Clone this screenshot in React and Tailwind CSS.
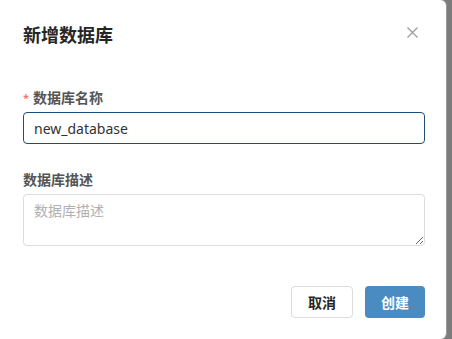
import React from "react";

export default function App() {
  const font = { fontFamily: '"Noto Sans", "Noto Sans CJK SC", sans-serif' };
  return (
    <div className="w-[452px] h-[339px] bg-[#7c7c7c] overflow-hidden" style={font}>
      <div className="w-[447px] h-[339px] bg-white rounded-r-[6px] border-r border-[#9a9a9a] flex flex-col pl-[23px] pr-[21px]">
        <div className="flex items-start justify-between pt-[23px]">
          <h2 className="text-[18px] leading-[24px] font-bold text-[#262626]">新增数据库</h2>
          <button className="w-[11px] h-[11px] mt-[4px] mr-[7px] flex items-center justify-center">
            <svg width="11" height="11" viewBox="0 0 11 11" fill="none" stroke="#9a9a9a" strokeWidth="1.2">
              <path d="M0.5 0.5L10.5 10.5M10.5 0.5L0.5 10.5" />
            </svg>
          </button>
        </div>

        <label className="mt-[41px] flex items-start text-[14px] leading-[20px] font-semibold text-[#555]">
          <span className="text-[#f56c6c] text-[11px] leading-[14px] mr-[4px] mt-[3px]">*</span>
          数据库名称
        </label>
        <div className="mt-[4px] h-[32px] border border-[#1d4f7c] rounded-[4px] flex items-center px-[10px] text-[14px] text-[#333]">
          new_database
        </div>

        <label className="mt-[26px] text-[14px] leading-[20px] font-semibold text-[#555]">数据库描述</label>
        <textarea
          className="mt-[4px] h-[52px] border border-[#dcdcdc] rounded-[4px] px-[10px] py-[6px] text-[14px] leading-[20px] text-[#333] placeholder:text-[#b0b0b0] outline-none"
          placeholder="数据库描述"
          style={font}
        />

        <div className="mt-[40px] flex justify-end gap-[12px]">
          <button className="w-[62px] h-[32px] border border-[#dcdcdc] rounded-[4px] bg-white text-[14px] font-bold text-[#262626]">
            取消
          </button>
          <button className="w-[60px] h-[32px] rounded-[4px] bg-[#4a8bc2] text-[14px] font-bold text-white">
            创建
          </button>
        </div>
      </div>
    </div>
  );
}
